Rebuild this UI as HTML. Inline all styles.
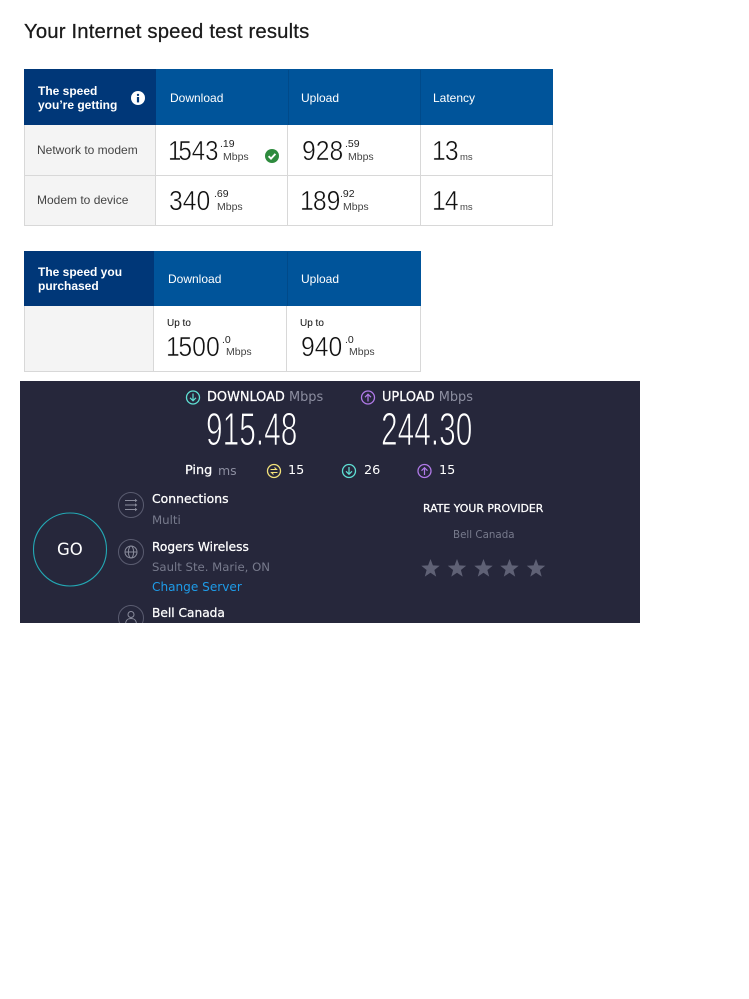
<!DOCTYPE html>
<html><head><meta charset="utf-8">
<style>
html,body{margin:0;padding:0;background:#fff;width:749px;height:999px;overflow:hidden;font-family:"Liberation Sans",sans-serif}
.a{position:absolute;white-space:nowrap;line-height:1}
.b{position:absolute}
.hd{color:#fff;font-size:12px}
.th{color:#fff;font-size:12px;font-weight:bold;line-height:14px;white-space:nowrap;position:absolute}
.lab{color:#444;font-size:12px}
.big{color:#111;font-size:27.5px;-webkit-text-stroke:.5px #fff;transform-origin:0 0;transform:scaleX(.9)}
.nar{transform:scaleX(.875)}
.one{letter-spacing:-3.5px}
.sm{color:#222;font-size:10.5px}
.un{color:#444;font-size:10.5px}
.ms{color:#444;font-size:9.5px}
.d{font-family:"DejaVu Sans",sans-serif}
.t{-webkit-text-stroke:.25px #fff}
.cond{color:#fff;font-size:46.500px;transform-origin:0 0;transform:scaleX(.642);-webkit-text-stroke:1.1px #26273b}
</style></head><body>

<div class="a" style="left:24px;top:22px;font-size:20.300px;color:#1a1a1a;letter-spacing:.17px;-webkit-text-stroke:.25px #1a1a1a">Your Internet speed test results</div>

<!-- table 1 -->
<div class="b" style="left:24px;top:69px;width:528px;height:157px;background:#fff"></div>
<div class="b" style="left:24px;top:69px;width:529px;height:56px;background:#00549a"></div>
<div class="b" style="left:24px;top:69px;width:132px;height:56px;background:#003778"></div>
<div class="b" style="left:288px;top:70px;width:1px;height:55px;background:#004a8a"></div>
<div class="b" style="left:420px;top:70px;width:1px;height:55px;background:#004a8a"></div>
<div class="b" style="left:24px;top:125px;width:132px;height:100px;background:#f4f4f4"></div>
<div class="b" style="left:24px;top:125px;width:1px;height:101px;background:#d8d8d8"></div>
<div class="b" style="left:155px;top:125px;width:1px;height:101px;background:#d8d8d8"></div>
<div class="b" style="left:287px;top:125px;width:1px;height:101px;background:#d8d8d8"></div>
<div class="b" style="left:420px;top:125px;width:1px;height:101px;background:#d8d8d8"></div>
<div class="b" style="left:552px;top:125px;width:1px;height:101px;background:#d8d8d8"></div>
<div class="b" style="left:24px;top:175px;width:529px;height:1px;background:#d8d8d8"></div>
<div class="b" style="left:24px;top:225px;width:529px;height:1px;background:#d8d8d8"></div>

<div class="th" style="left:38px;top:84px">The speed<br>you’re getting</div>
<svg class="b" style="left:131px;top:91px" width="14" height="14" viewBox="0 0 14 14"><circle cx="7" cy="7" r="7" fill="#fff"/><rect x="5.900" y="6" width="2.200" height="5.400" fill="#003778"/><circle cx="7" cy="3.900" r="1.200" fill="#003778"/></svg>
<div class="a hd" style="left:170px;top:92px">Download</div>
<div class="a hd" style="left:301px;top:92px">Upload</div>
<div class="a hd" style="left:433px;top:92px">Latency</div>

<div class="a lab" style="left:37px;top:144px">Network to modem</div>
<div class="a lab" style="left:37px;top:194px">Modem to device</div>

<div class="a big nar" style="left:168px;top:137px"><span class="one">1</span>543</div>
<div class="a sm" style="left:220px;top:139px">.19</div>
<div class="a un" style="left:223px;top:152px">Mbps</div>
<svg class="b" style="left:265px;top:149px" width="14" height="14" viewBox="0 0 14 14"><circle cx="7" cy="7" r="7" fill="#2e8b3e"/><path d="M3.600 7.200 L6 9.600 L10.400 4.900" fill="none" stroke="#fff" stroke-width="1.900"/></svg>

<div class="a big" style="left:301.500px;top:137px">928</div>
<div class="a sm" style="left:345px;top:139px">.59</div>
<div class="a un" style="left:348px;top:152px">Mbps</div>
<div class="a big" style="left:432px;top:137px"><span style="letter-spacing:-1px">1</span>3</div>
<div class="a ms" style="left:460px;top:153px">ms</div>

<div class="a big" style="left:169px;top:187px">340</div>
<div class="a sm" style="left:214px;top:189px">.69</div>
<div class="a un" style="left:217px;top:202px">Mbps</div>
<div class="a big" style="left:300px;top:187px"><span style="letter-spacing:-1px">1</span>89</div>
<div class="a sm" style="left:340px;top:189px">.92</div>
<div class="a un" style="left:343px;top:202px">Mbps</div>
<div class="a big" style="left:432px;top:187px"><span style="letter-spacing:-1px">1</span>4</div>
<div class="a ms" style="left:460px;top:203px">ms</div>

<!-- table 2 -->
<div class="b" style="left:24px;top:251px;width:397px;height:55px;background:#00549a"></div>
<div class="b" style="left:24px;top:251px;width:130px;height:55px;background:#003778"></div>
<div class="b" style="left:287px;top:252px;width:1px;height:54px;background:#004a8a"></div>
<div class="b" style="left:24px;top:306px;width:130px;height:65px;background:#f4f4f4"></div>
<div class="b" style="left:24px;top:306px;width:1px;height:66px;background:#d8d8d8"></div>
<div class="b" style="left:153px;top:306px;width:1px;height:66px;background:#d8d8d8"></div>
<div class="b" style="left:286px;top:306px;width:1px;height:66px;background:#d8d8d8"></div>
<div class="b" style="left:420px;top:306px;width:1px;height:66px;background:#d8d8d8"></div>
<div class="b" style="left:24px;top:371px;width:397px;height:1px;background:#d8d8d8"></div>

<div class="th" style="left:38px;top:265px">The speed you<br>purchased</div>
<div class="a hd" style="left:168px;top:273px">Download</div>
<div class="a hd" style="left:301px;top:273px">Upload</div>

<div class="a" style="left:167px;top:319px;font-size:10px;color:#222;-webkit-text-stroke:.1px #222">Up to</div>
<div class="a big" style="left:166px;top:333px"><span style="letter-spacing:-1.500px">1</span>500</div>
<div class="a sm" style="left:222px;top:335px">.0</div>
<div class="a un" style="left:226px;top:347px">Mbps</div>
<div class="a" style="left:300px;top:319px;font-size:10px;color:#222;-webkit-text-stroke:.1px #222">Up to</div>
<div class="a big" style="left:301px;top:333px">940</div>
<div class="a sm" style="left:345px;top:335px">.0</div>
<div class="a un" style="left:349px;top:347px">Mbps</div>

<!-- speedtest panel -->
<div class="b" style="left:20px;top:381px;width:620px;height:242px;background:#26273b;overflow:hidden">
<svg class="b" style="left:0;top:0" width="620" height="242" viewBox="20 381 620 242" fill="none">
<circle cx="193" cy="397.500" r="6.500" stroke="#5fe0d4" stroke-width="1.300"/><path d="M193 393.500v7M190 397.800l3 3 3-3" stroke="#5fe0d4" stroke-width="1.200"/>
<circle cx="368" cy="397.500" r="6.500" stroke="#b07ae8" stroke-width="1.300"/><path d="M368 401.500v-7M365 397.200l3-3 3 3" stroke="#b07ae8" stroke-width="1.200"/>
<circle cx="274" cy="471" r="6.500" stroke="#f3e27a" stroke-width="1.300"/><path d="M270.500 469.500h6l-2-2M277.500 472.500h-6l2 2" stroke="#f3e27a" stroke-width="1.100"/>
<circle cx="349" cy="471" r="6.500" stroke="#5fe0d4" stroke-width="1.300"/><path d="M349 467v7M346 471.300l3 3 3-3" stroke="#5fe0d4" stroke-width="1.200"/>
<circle cx="424.500" cy="471" r="6.500" stroke="#b07ae8" stroke-width="1.300"/><path d="M424.500 475v-7M421.500 470.700l3-3 3 3" stroke="#b07ae8" stroke-width="1.200"/>
<circle cx="70" cy="549.500" r="36.500" stroke="#23a8b4" stroke-width="1.100"/>
<circle cx="131" cy="505" r="12.500" stroke="#5a5c70" stroke-width="1"/>
<path d="M125 500.500h10M125 505h10M125 509.500h10" stroke="#8a8c9c" stroke-width=".9"/><path d="M135 498.800l2.400 1.700-2.400 1.700zM135 503.300l2.400 1.700-2.400 1.700zM135 507.800l2.400 1.700-2.400 1.700z" fill="#8a8c9c"/>
<circle cx="131" cy="552" r="12.500" stroke="#5a5c70" stroke-width="1"/>
<circle cx="131" cy="552" r="6" stroke="#8a8c9c"/><ellipse cx="131" cy="552" rx="2.600" ry="6" stroke="#8a8c9c"/><path d="M125 552h12" stroke="#8a8c9c"/>
<circle cx="131" cy="618" r="12.500" stroke="#5a5c70" stroke-width="1"/>
<circle cx="131" cy="614.500" r="3" stroke="#8a8c9c"/><path d="M125.500 625c0-5 2-6.500 5.500-6.500s5.500 1.500 5.500 6.500" stroke="#8a8c9c"/>
<g fill="#5f6175">
<path d="M430.500 559l2.400 6.400 6.800.3-5.300 4.300 1.800 6.600-5.700-3.800-5.700 3.800 1.800-6.600-5.300-4.300 6.800-.3z"/>
<path d="M457 559l2.400 6.400 6.800.3-5.300 4.300 1.800 6.600-5.700-3.800-5.700 3.800 1.800-6.600-5.300-4.300 6.800-.3z"/>
<path d="M483.500 559l2.400 6.400 6.800.3-5.300 4.300 1.800 6.600-5.700-3.800-5.700 3.800 1.800-6.600-5.300-4.300 6.800-.3z"/>
<path d="M509.500 559l2.400 6.400 6.800.3-5.300 4.300 1.800 6.600-5.700-3.800-5.700 3.800 1.800-6.600-5.300-4.300 6.800-.3z"/>
<path d="M536 559l2.400 6.400 6.800.3-5.300 4.300 1.800 6.600-5.700-3.800-5.700 3.800 1.800-6.600-5.300-4.300 6.800-.3z"/>
</g>
</svg>
</div>

<div class="a d t" style="left:207px;top:392px;font-size:12.900px;color:#fff">DOWNLOAD <span style="color:#8c8ea0;-webkit-text-stroke:0">Mbps</span></div>
<div class="a d t" style="left:382px;top:392px;font-size:12.900px;color:#fff">UPLOAD <span style="color:#8c8ea0;-webkit-text-stroke:0">Mbps</span></div>
<div class="a cond" style="left:206px;top:406px">915.48</div>
<div class="a cond" style="left:381px;top:406px">244.30</div>
<div class="a d t" style="left:185px;top:465px;font-size:12.800px;color:#fff">Ping</div>
<div class="a d" style="left:218px;top:465px;font-size:12.500px;color:#8c8ea0">ms</div>
<div class="a d" style="left:288px;top:465px;font-size:12.800px;color:#fff">15</div>
<div class="a d" style="left:364px;top:465px;font-size:12.800px;color:#fff">26</div>
<div class="a d" style="left:439px;top:465px;font-size:12.800px;color:#fff">15</div>
<div class="a d" style="left:57px;top:542px;font-size:16.500px;color:#fff">GO</div>

<div class="a d t" style="left:152px;top:493px;font-size:12.400px;color:#fff">Connections</div>
<div class="a d" style="left:152px;top:515px;font-size:11.800px;color:#777a8c">Multi</div>
<div class="a d t" style="left:152px;top:541px;font-size:12.200px;color:#fff">Rogers Wireless</div>
<div class="a d" style="left:152px;top:562px;font-size:11.700px;color:#777a8c">Sault Ste. Marie, ON</div>
<div class="a d" style="left:152px;top:581px;font-size:12.100px;color:#1e9be8">Change Server</div>
<div class="a d t" style="left:152px;top:607px;font-size:12.200px;color:#fff">Bell Canada</div>
<div class="a d t" style="left:423px;top:504px;font-size:10.900px;color:#fff">RATE YOUR PROVIDER</div>
<div class="a d" style="left:453px;top:530px;font-size:10.300px;color:#777a8c">Bell Canada</div>

</body></html>
